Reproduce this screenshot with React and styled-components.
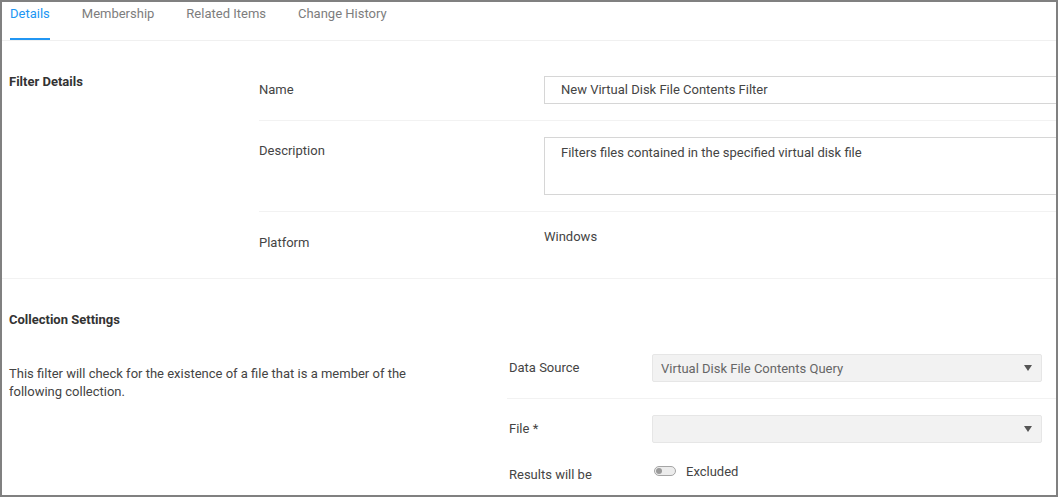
import styled, { createGlobalStyle } from "styled-components";

const Global = createGlobalStyle`
  html, body { margin: 0; padding: 0; background: #fff; }
  body { font-family: Roboto, "Liberation Sans", Arial, sans-serif; }
`;

const Frame = styled.div`
  width: 1058px;
  height: 497px;
  box-sizing: border-box;
  border: 2px solid #808080;
  overflow: hidden;
  background: #fff;
  font-size: 13px;
  color: #444;
`;

const Tabs = styled.div`
  display: flex;
  height: 38px;
  border-bottom: 1px solid #f0f0f0;
  padding-left: 8px;
`;

const Tab = styled.div`
  height: 38px;
  box-sizing: border-box;
  padding-top: 4px;
  margin-right: ${(p) => p.gap}px;
  color: ${(p) => (p.active ? "#2196f3" : "#7d7d7d")};
  border-bottom: 2px solid ${(p) => (p.active ? "#2196f3" : "transparent")};
  line-height: 16px;
`;

const Section = styled.div`
  display: flex;
  border-bottom: ${(p) => (p.last ? "none" : "1px solid #f2f2f2")};
`;

const SideHead = styled.div`
  width: ${(p) => p.w}px;
  flex: none;
  box-sizing: border-box;
  padding: ${(p) => p.top}px 7px 0;
`;

const Heading = styled.div`
  font-weight: bold;
  color: #333;
  line-height: 16px;
`;

const Intro = styled.p`
  margin: 37px 0 0;
  line-height: 18px;
  width: 410px;
  color: #444;
`;

const Rows = styled.div`
  flex: 1;
  padding-top: ${(p) => p.top}px;
`;

const Row = styled.div`
  display: flex;
  align-items: ${(p) => (p.center ? "center" : "flex-start")};
  padding: ${(p) => p.pt ?? 16}px 0 ${(p) => p.bottom ?? 16}px;
  border-bottom: ${(p) => (p.line ? "1px solid #f2f2f2" : "none")};
`;

const Label = styled.div`
  width: ${(p) => p.w}px;
  flex: none;
  box-sizing: border-box;
  padding-left: ${(p) => p.indent || 0}px;
  line-height: 28px;
  color: #444;
`;

const TextInput = styled.div`
  width: 600px;
  height: ${(p) => p.h}px;
  box-sizing: border-box;
  border: 1px solid #d6d6d6;
  padding: ${(p) => (p.multi ? "7px" : "0")} 16px;
  line-height: ${(p) => (p.multi ? "16px" : "26px")};
  color: #444;
`;

const Plain = styled.div`
  line-height: 16px;
  color: #444;
`;

const Select = styled.div`
  width: 390px;
  height: 28px;
  box-sizing: border-box;
  background: #f2f2f2;
  border: 1px solid #e6e6e6;
  border-radius: 2px;
  display: flex;
  align-items: center;
  justify-content: space-between;
  padding: 0 8px;
  color: #666;
`;

const Caret = styled.span`
  width: 0;
  height: 0;
  border-left: 4px solid transparent;
  border-right: 4px solid transparent;
  border-top: 6px solid #555;
  margin-right: 1px;
`;

const Toggle = styled.span`
  width: 19px;
  height: 8px;
  border: 1.5px solid #a5a5a5;
  border-radius: 6px;
  background: #ececec;
  display: inline-flex;
  align-items: center;
  padding-left: 1px;
  margin: 0 10px 0 2px;
  &::before {
    content: "";
    width: 6px;
    height: 6px;
    border-radius: 50%;
    background: #9a9a9a;
  }
`;

const Switch = styled.div`
  display: flex;
  align-items: center;
  color: #444;
  margin-top: -8px;
`;

export default function App() {
  return (
    <>
      <Global />
      <Frame>
        <Tabs>
          <Tab active gap={32}>Details</Tab>
          <Tab gap={32}>Membership</Tab>
          <Tab gap={32}>Related Items</Tab>
          <Tab gap={0}>Change History</Tab>
        </Tabs>

        <Section>
          <SideHead w={257} top={33}>
            <Heading>Filter Details</Heading>
          </SideHead>
          <Rows top={19}>
            <Row center line>
              <Label w={285}>Name</Label>
              <TextInput h={28}>New Virtual Disk File Contents Filter</TextInput>
            </Row>
            <Row line>
              <Label w={285}>Description</Label>
              <TextInput multi h={58}>Filters files contained in the specified virtual disk file</TextInput>
            </Row>
            <Row pt={17} bottom={21}>
              <Label w={285}>Platform</Label>
              <Plain>Windows</Plain>
            </Row>
          </Rows>
        </Section>

        <Section last>
          <SideHead w={505} top={33}>
            <Heading>Collection Settings</Heading>
            <Intro>
              This filter will check for the existence of a file that is a member of the following collection.
            </Intro>
          </SideHead>
          <Rows top={59}>
            <Row center line>
              <Label w={145} indent={2}>Data Source</Label>
              <Select>
                <span>Virtual Disk File Contents Query</span>
                <Caret />
              </Select>
            </Row>
            <Row center bottom={6}>
              <Label w={145} indent={2}>File *</Label>
              <Select>
                <span />
                <Caret />
              </Select>
            </Row>
            <Row center pt={12} bottom={0}>
              <Label w={145} indent={2}>Results will be</Label>
              <Switch>
                <Toggle />
                Excluded
              </Switch>
            </Row>
          </Rows>
        </Section>
      </Frame>
    </>
  );
}
